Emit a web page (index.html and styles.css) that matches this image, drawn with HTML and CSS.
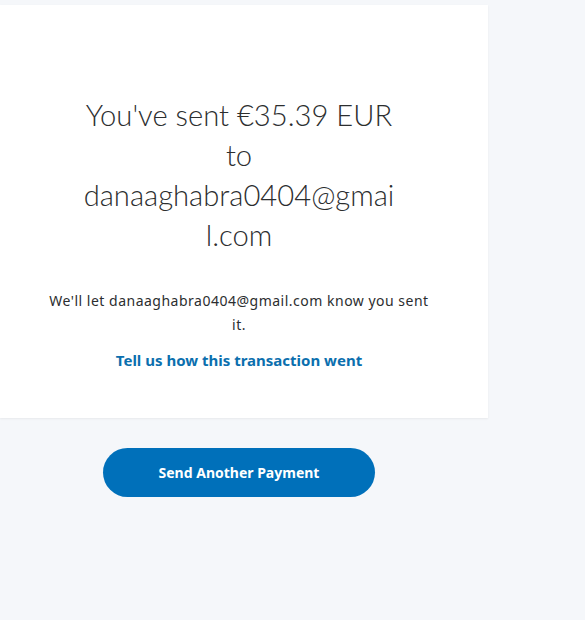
FILE: index.html
```html
<!DOCTYPE html>
<html lang="en">
<head>
<meta charset="utf-8">
<title>Payment sent</title>
<link rel="stylesheet" href="styles.css">
</head>
<body>
<main class="page">
  <section class="card">
    <div class="content">
      <h1 class="title">You've sent €35.39 EUR to danaaghabra0404@gmail.com</h1>
      <p class="note">We'll let danaaghabra0404@gmail.com know you sent it.</p>
      <a class="feedback" href="#">Tell us how this transaction went</a>
    </div>
  </section>
  <div class="actions">
    <button class="primary" type="button">Send Another Payment</button>
  </div>
</main>
</body>
</html>
```

FILE: styles.css
```css
html, body {
  margin: 0;
  padding: 0;
  background: #f5f7fa;
}
body {
  font-family: "Noto Sans", "Open Sans", sans-serif;
  color: #2c2e2f;
  height: 620px;
}
.page {
  width: 488px;
  padding-top: 5px;
}
.card {
  background: #ffffff;
  height: 413px;
  box-shadow: 0 1px 2px rgba(0, 0, 0, 0.06);
  box-sizing: border-box;
  padding: 90px 10px 0 0;
}
.content {
  width: 478px;
  display: flex;
  flex-direction: column;
  align-items: center;
  text-align: center;
}
.title {
  font-family: Lato, "Noto Sans", sans-serif;
  font-weight: 300;
  font-size: 29.2px;
  line-height: 40px;
  width: 313px;
  margin: 0;
  overflow-wrap: anywhere;
  color: #2c2e2f;
}
.note {
  margin: 34px 0 0;
  width: 392px;
  font-size: 14px;
  line-height: 24px;
  letter-spacing: 0.5px;
  color: #2c2e2f;
}
.feedback {
  margin-top: 12px;
  font-size: 15px;
  line-height: 22px;
  font-weight: 700;
  color: #0b6fae;
  text-decoration: none;
}
.actions {
  width: 478px;
  display: flex;
  justify-content: center;
  padding-top: 30px;
}
.primary {
  width: 272px;
  height: 49px;
  border: none;
  border-radius: 25px;
  background: #0070ba;
  color: #ffffff;
  font-family: "Noto Sans", "Open Sans", sans-serif;
  font-weight: 700;
  font-size: 14px;
}
```
